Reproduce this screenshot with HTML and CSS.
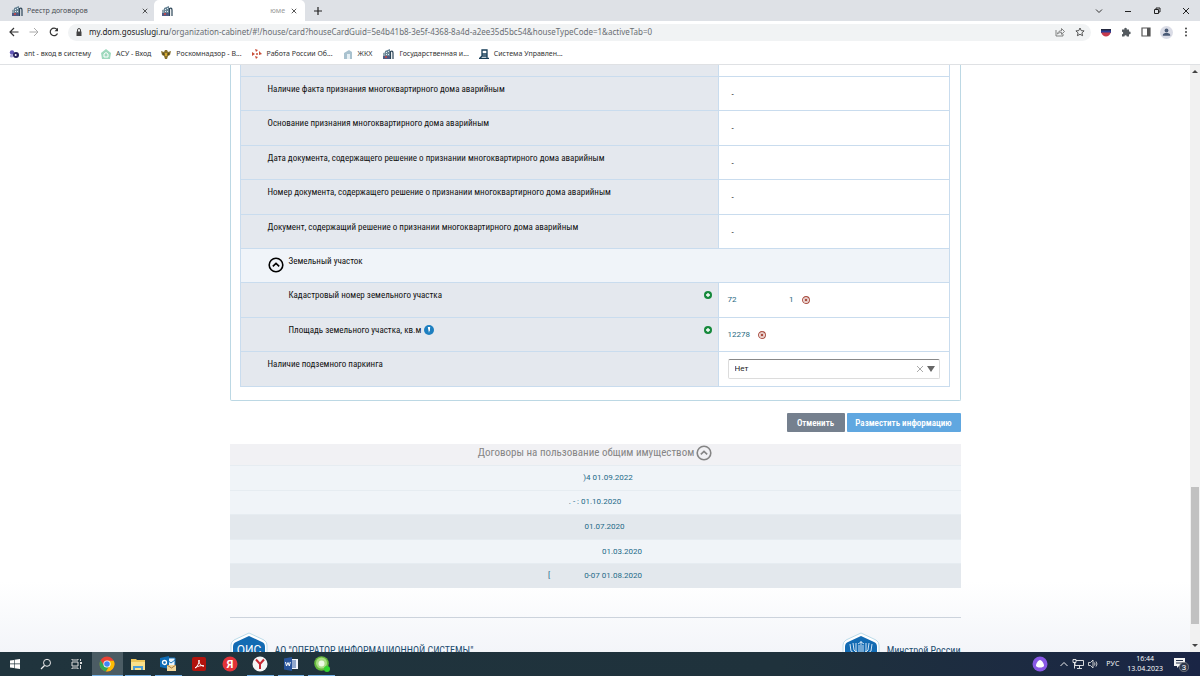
FILE: index.html
```html
<!DOCTYPE html>
<html lang="ru">
<head>
<meta charset="utf-8">
<title>Карточка дома</title>
<link rel="stylesheet" href="styles.css">
</head>
<body>
<svg class="defs" aria-hidden="true">
  <symbol id="building" viewBox="0 0 12 12">
    <path d="M1 5l3-1v7H1z" fill="#8fa3ae"/><path d="M3 3l5-2v9H3z" fill="#6a8596"/><path d="M4 4h1v1H4zm2-1h1v1H6zM4 6h1v1H4zm2 0h1v1H6z" fill="#dcebf2"/><path d="M8.500 11V3.500q2.500-1 2.500 1.500v6" fill="none" stroke="#2c4557" stroke-width="1.2"/><path d="M1 8h7v3H1z" fill="#4f5b85"/><path d="M3 8h2v2H3z" fill="#b34b50"/>
  </symbol>
  <symbol id="chevron-circle" viewBox="0 0 16 16">
    <circle cx="8" cy="8" r="6.8" fill="none" stroke="currentColor" stroke-width="1.6"/><path d="M4.8 9.3L8 6.4l3.2 2.9" fill="none" stroke="currentColor" stroke-width="1.6"/>
  </symbol>
  <symbol id="plus" viewBox="0 0 8 8">
    <circle cx="4" cy="4" r="4" fill="#16893c"/><path d="M4 2v4M2 4h4" stroke="#fff" stroke-width="1.3"/>
  </symbol>
  <symbol id="remove" viewBox="0 0 8 8">
    <circle cx="4" cy="4" r="3.4" fill="#fff" stroke="#a84b3e" stroke-width="1.1"/><path d="M2.600 2.600l2.800 2.800m0-2.800L2.600 5.400" stroke="#a84b3e" stroke-width="1.2"/>
  </symbol>
  <symbol id="close" viewBox="0 0 8 8">
    <path d="M1 1l6 6m0-6L1 7" fill="none" stroke="currentColor"/>
  </symbol>
</svg>

<header class="browser">
  <div class="tabs">
    <div class="tab"><svg class="favicon"><use href="#building"/></svg><span class="tab-title">Реестр договоров</span><button class="tab-close" aria-label="Закрыть"><svg class="i6"><use href="#close"/></svg></button></div>
    <div class="tab active"><svg class="favicon"><use href="#building"/></svg><span class="tab-title tab-title-end">юме</span><button class="tab-close" aria-label="Закрыть"><svg class="i6"><use href="#close"/></svg></button></div>
    <button class="new-tab" aria-label="Новая вкладка"><svg class="i8" viewBox="0 0 8 8"><path d="M4 0v8M0 4h8" stroke="#222" stroke-width="1.2"/></svg></button>
    <div class="window-controls">
      <button aria-label="Поиск вкладок"><svg class="i8" viewBox="0 0 8 8"><path d="M1 2.5l3 3 3-3" fill="none" stroke="#333"/></svg></button>
      <button aria-label="Свернуть"><svg class="i8" viewBox="0 0 8 8"><path d="M1 4.5h6" stroke="#222"/></svg></button>
      <button aria-label="Окно"><svg class="i8" viewBox="0 0 8 8"><path d="M1.5 2.5h4v4h-4zM3 2.500V1h4v4H5.500" fill="none" stroke="#222"/></svg></button>
      <button aria-label="Закрыть окно"><svg class="i8"><use href="#close"/></svg></button>
    </div>
  </div>
  <div class="toolbar">
    <button aria-label="Назад"><svg class="i10" viewBox="0 0 10 10"><path d="M9.500 5H1m4-4L1 5l4 4" fill="none" stroke="#333" stroke-width="1.2"/></svg></button>
    <button aria-label="Вперёд"><svg class="i10" viewBox="0 0 10 10"><path d="M.5 5H9M5 1l4 4-4 4" fill="none" stroke="#aaa"/></svg></button>
    <button aria-label="Обновить"><svg class="i10" viewBox="0 0 10 10"><path d="M8.500 6.500A3.800 3.800 0 1 1 8 2.500" fill="none" stroke="#333" stroke-width="1.2"/><path d="M9 .8v3.500H5.500z" fill="#333"/></svg></button>
    <div class="address">
      <svg class="i8" viewBox="0 0 8 8"><path d="M1.500 3.500h5V8h-5z" fill="#444"/><path d="M2.500 4V2a1.500 1.500 0 0 1 3 0v2" fill="none" stroke="#444"/></svg>
      <div class="url" role="textbox" aria-label="Адрес"><span class="host">my.dom.gosuslugi.ru</span>/organization-cabinet/#!/house/card?houseCardGuid=5e4b41b8-3e5f-4368-8a4d-a2ee35d5bc54&amp;houseTypeCode=1&amp;activeTab=0</div>
      <button aria-label="Поделиться"><svg class="i10" viewBox="0 0 10 10"><path d="M1 3v6h7V7M2.500 7c.5-2.500 2-3.200 4-3.200V1.500l3 3-3 2.800V5.500C5 5.500 3.500 5.800 2.500 7z" fill="none" stroke="#666" stroke-width=".8"/></svg></button>
      <button aria-label="Закладка"><svg class="i10" viewBox="0 0 10 10"><path d="M5 1l1.200 2.600 2.900.3-2.200 2 .7 2.800L5 7.300 2.400 8.700l.7-2.800-2.200-2 2.900-.3z" fill="none" stroke="#444" stroke-width=".9"/></svg></button>
    </div>
    <div class="extensions">
      <button aria-label="Расширение"><svg class="i12" viewBox="0 0 12 12"><path d="M1 4h10v3H1z" fill="#2b3f97"/><path d="M1 3h10v1.500H1z" fill="#24283e"/><path d="M1.200 6.500h9.600C10 9 8 10.500 6 10.500S2 9 1.200 6.500z" fill="#c53a4d"/></svg></button>
      <button aria-label="Расширения"><svg class="i10" viewBox="0 0 10 10"><path d="M1 2.500h2.300a1.300 1.300 0 1 1 2.500 0H8v2.200a1.300 1.300 0 1 1 0 2.500V9.500H5.800a1.200 1.200 0 0 0-2.400 0H1V7.200a1.200 1.200 0 0 0 0-2.400z" fill="#555b60"/></svg></button>
      <button aria-label="Боковая панель"><svg class="i10" viewBox="0 0 10 10"><path d="M1 1h8v8H1z" fill="none" stroke="#555" stroke-width="1.2"/><path d="M6 1h3v8H6z" fill="#555"/></svg></button>
      <button aria-label="Профиль"><svg class="i13" viewBox="0 0 13 13"><circle cx="6.500" cy="6.500" r="6.500" fill="#dadce6"/><circle cx="6.500" cy="4.500" r="1.900" fill="#4a5b76"/><path d="M2.800 9.800V9c0-2.600 7.400-2.600 7.400 0v.8z" fill="#4a5b76"/></svg></button>
      <button aria-label="Меню"><svg class="i10" viewBox="0 0 10 10"><g fill="#444"><circle cx="5" cy="1.500" r="1"/><circle cx="5" cy="5" r="1"/><circle cx="5" cy="8.500" r="1"/></g></svg></button>
    </div>
  </div>
  <nav class="bookmarks">
    <a href="#"><svg class="i10" viewBox="0 0 10 10"><circle cx="3" cy="3.500" r="2.200" fill="#6257b8"/><circle cx="7" cy="6" r="3" fill="#27215f"/><circle cx="2.500" cy="7" r="1.600" fill="#a6a0d8"/><circle cx="6.700" cy="6" r="1" fill="#fff"/></svg>ant - вход в систему</a>
    <a href="#"><svg class="i10" viewBox="0 0 10 10"><path d="M5 0l5 4-1 6H1L0 4z" fill="#9ed9bd"/><path d="M3 8V5l2-1.500L7 5v3z" fill="none" stroke="#fff"/></svg>АСУ - Вход</a>
    <a href="#"><svg class="i10" viewBox="0 0 10 10"><path d="M0 2l3 1 1-2h2l1 2 3-1-1 4-2 1-1 3H4L3 7 1 6z" fill="#86702b"/><path d="M4 4h2v3H4z" fill="#d5a92f"/><path d="M2 4l1 2m5-2L7 6" stroke="#443b25"/></svg>Роскомнадзор - В...</a>
    <a href="#"><svg class="i10" viewBox="0 0 10 10"><g fill="#c94f3a"><path d="M3 0l3 1-2 2zM7 2l3 3-3 1zM3 7l3 1-2 2zM0 3l3 2-3 2z"/><circle cx="5" cy="5" r="1"/></g></svg>Работа России Об...</a>
    <a href="#"><svg class="i10" viewBox="0 0 10 10"><path d="M1 4l5-3 3 2v7H7V5H4v5H1z" fill="#a9c2cf"/><path d="M4 5h3v5H4z" fill="#e5eff4"/></svg>ЖКХ</a>
    <a href="#"><svg class="favicon"><use href="#building"/></svg>Государственная и...</a>
    <a href="#"><svg class="i10" viewBox="0 0 10 10"><path d="M3 1h5v6H3zM0 9.300h10M3 7L1 9m7-2v2M3 5h5" fill="none" stroke="#173e58" stroke-width="1.3"/></svg>Система Управлен...</a>
  </nav>
</header>

<div class="viewport">
  <main class="page">
    <section class="panel">
      <table class="props">
        <colgroup><col class="col-name"><col></colgroup>
        <tbody>
        <tr class="cut"><th></th><td></td></tr>
        <tr><th scope="row">Наличие факта признания многоквартирного дома аварийным</th><td>-</td></tr>
        <tr><th scope="row">Основание признания многоквартирного дома аварийным</th><td>-</td></tr>
        <tr><th scope="row">Дата документа, содержащего решение о признании многоквартирного дома аварийным</th><td>-</td></tr>
        <tr><th scope="row">Номер документа, содержащего решение о признании многоквартирного дома аварийным</th><td>-</td></tr>
        <tr><th scope="row">Документ, содержащий решение о признании многоквартирного дома аварийным</th><td>-</td></tr>
        <tr class="group"><th colspan="2" scope="rowgroup"><div class="group-title"><button class="fold" aria-label="Свернуть раздел"><svg class="i16"><use href="#chevron-circle"/></svg></button><span>Земельный участок</span></div></th></tr>
        <tr class="sub"><th scope="row"><div class="name"><span>Кадастровый номер земельного участка</span><button aria-label="Добавить"><svg class="i8"><use href="#plus"/></svg></button></div></th><td class="filled"><div class="value"><a href="#" class="cadastre"><span>72</span><span>1</span></a><button aria-label="Удалить"><svg class="i8"><use href="#remove"/></svg></button></div></td></tr>
        <tr class="sub"><th scope="row"><div class="name"><span>Площадь земельного участка, кв.м</span><svg class="i10 hint" viewBox="0 0 10 10"><circle cx="5" cy="5" r="5" fill="#1d7fc0"/><path d="M3.800 2h2.400L5.800 6h-.4L5 8l-.4-2z" fill="#fff"/></svg><button aria-label="Добавить"><svg class="i8"><use href="#plus"/></svg></button></div></th><td class="filled"><div class="value"><a href="#">12278</a><button aria-label="Удалить"><svg class="i8"><use href="#remove"/></svg></button></div></td></tr>
        <tr><th scope="row"><label for="parking">Наличие подземного паркинга</label></th><td class="filled"><div class="combo"><select id="parking"><option>Нет</option><option>Да</option></select><button aria-label="Очистить"><svg class="i8"><use href="#close"/></svg></button><svg class="i8" viewBox="0 0 8 8"><path d="M0 1h8L4 7z" fill="#666"/></svg></div></td></tr>
        </tbody>
      </table>
    </section>
    <div class="actions"><button class="btn cancel">Отменить</button><button class="btn submit">Разместить информацию</button></div>
    <section class="contracts">
      <h2>Договоры на пользование общим имуществом <button class="fold" aria-label="Свернуть список"><svg class="i16"><use href="#chevron-circle"/></svg></button></h2>
      <ul>
        <li><a href="#"><span class="gap-m"></span>)4 01.09.2022</a></li>
        <li><a href="#">. - : 01.10.2020</a></li>
        <li class="dark"><a href="#"><span class="gap-s"></span>01.07.2020</a></li>
        <li><a href="#"><span class="gap-l"></span>01.03.2020</a></li>
        <li class="dark"><a href="#">[<span class="gap-n"></span>0-07 01.08.2020</a></li>
      </ul>
    </section>
    <footer class="site-footer">
      <div class="org"><svg class="hex" viewBox="0 0 38 42"><path d="M19 1l15 7q3 2 3 5v16q0 3-3 5l-15 7-15-7q-3-2-3-5V13q0-3 3-5z" fill="#fff" stroke="#bcdcea"/><path d="M19 4l13 6q3 1 3 5v13q0 3-3 4l-13 6-13-6q-3-1-3-4V15q0-4 3-5z" fill="#126bb3"/><text x="19" y="22" text-anchor="middle" class="hex-text">ОИС</text></svg><span>АО "ОПЕРАТОР ИНФОРМАЦИОННОЙ СИСТЕМЫ"</span></div>
      <div class="org"><svg class="hex" viewBox="0 0 38 42"><path d="M19 1l15 7q3 2 3 5v16q0 3-3 5l-15 7-15-7q-3-2-3-5V13q0-3 3-5z" fill="#fff" stroke="#bcdcea"/><path d="M19 4l13 6q3 1 3 5v13q0 3-3 4l-13 6-13-6q-3-1-3-4V15q0-4 3-5z" fill="#126bb3"/><path d="M19 9v12M16 12l3-2 3 2M17 13v8M21 13v8M8 12l1 7 6 4m15-11l-1 7-6 4M11 11l1 7 4 4m11-11l-1 7-4 4M14 11v8l3 4m7-12v8l-3 4" fill="none" stroke="#cfe4f4"/></svg><span>Минстрой России</span></div>
    </footer>
  </main>
  <div class="scrollbar" aria-hidden="true"><svg class="i6" viewBox="0 0 6 6"><path d="M0 5l3-3 3 3z" fill="#444"/></svg><div class="track"><div class="thumb"></div></div><svg class="i6" viewBox="0 0 6 6"><path d="M0 1l3 3 3-3z" fill="#444"/></svg></div>
</div>

<footer class="taskbar">
  <div class="apps">
    <button aria-label="Пуск"><svg class="i12" viewBox="0 0 12 12"><path d="M1 2.500l4-.6v3.700H1zM5.600 1.800L11 1v4.600H5.600zM1 6.300h4v3.700l-4-.6zM5.600 6.300H11v4.700l-5.400-.8z" fill="#fff"/></svg></button>
    <button aria-label="Поиск"><svg class="i12" viewBox="0 0 12 12"><circle cx="7" cy="4.800" r="3.500" fill="none" stroke="#eee"/><path d="M4.500 7.500L1 11" stroke="#eee" stroke-width="1.200"/></svg></button>
    <button aria-label="Представление задач"><svg class="i12" viewBox="0 0 12 12"><path d="M1 4h6v4H1zM1 1v1h6V1M1 11v-1h6v1M9.500 1v2m0 4v4" fill="none" stroke="#ddd"/><path d="M9 4h2v2H9z" fill="#ddd"/></svg></button>
    <button class="current open" aria-label="Chrome"><svg class="i16" viewBox="0 0 16 16"><circle cx="8" cy="8" r="7.500" fill="#e94235"/><path d="M1.500 4.200A7.500 7.500 0 0 0 7 15.400L10.800 9 8 8 5 9.500z" fill="#34a853"/><path d="M14.800 4.800A7.500 7.500 0 0 1 7 15.400L11 9 8 4.800z" fill="#fbbc05"/><circle cx="8" cy="8" r="3.600" fill="#fff"/><circle cx="8" cy="8" r="2.800" fill="#4285f4"/></svg></button>
    <button class="open" aria-label="Проводник"><svg class="i14" viewBox="0 0 14 14"><path d="M0 2h5l1 1h8v10H0z" fill="#efc65a"/><path d="M0 5h14v8H0z" fill="#fbe08b"/><path d="M2 9h10v4h-2v-2H4v2H2z" fill="#4e9ed6"/></svg></button>
    <button class="open" aria-label="Outlook"><svg class="i16" viewBox="0 0 16 16"><path d="M7 2h8v9H7z" fill="#eaf4fc" stroke="#1673ba"/><path d="M7 4l4 3 4-3" fill="none" stroke="#1673ba"/><path d="M0 2l9-2v13l-9-2z" fill="#0e6cb6"/><circle cx="4.500" cy="6.500" r="2" fill="none" stroke="#fff" stroke-width="1.300"/><path d="M7 9h9v6H7z" fill="#f3d79a"/><path d="M7 9l4.500 3L16 9" fill="none" stroke="#a5783e"/></svg></button>
    <button aria-label="Acrobat"><svg class="i14" viewBox="0 0 14 14"><rect width="14" height="14" rx="2" fill="#b1130d"/><path d="M3 11c3-2 4-5 4-8 0 4 2 6 5 6-3-1-6 0-9 2z" fill="none" stroke="#fff"/></svg></button>
    <button aria-label="Яндекс"><svg class="i16" viewBox="0 0 16 16"><circle cx="8" cy="8" r="7.500" fill="#e23239"/><text x="8" y="12" text-anchor="middle" class="logo-text">Я</text></svg></button>
    <button class="open" aria-label="Яндекс Браузер"><svg class="i16" viewBox="0 0 16 16"><circle cx="8" cy="8" r="7.500" fill="#f5f5f5"/><path d="M4 3.500L8 8l4-4.500M8 7.500V13" fill="none" stroke="#c82832" stroke-width="2"/></svg></button>
    <button class="open" aria-label="Word"><svg class="i14" viewBox="0 0 14 14"><path d="M7 2h7v10H7z" fill="#f1f5fb"/><path d="M8 4h4M8 6h4M8 8h4M8 10h4" stroke="#335c9e"/><path d="M0 1.500L8 0v14l-8-1.500z" fill="#28549b"/><path d="M1.500 5l1 4L4 5.500 5.300 9l1-4" fill="none" stroke="#fff"/></svg></button>
    <button class="open" aria-label="Мессенджер"><svg class="i16" viewBox="0 0 16 16"><circle cx="7.500" cy="7.500" r="7.300" fill="#65b83c"/><circle cx="7.500" cy="7" r="5.500" fill="#a9dd83"/><circle cx="7.500" cy="7.500" r="3" fill="#eefae5"/><circle cx="13" cy="13" r="3" fill="#32d52f"/></svg></button>
  </div>
  <div class="tray">
    <button aria-label="Алиса"><svg class="i16" viewBox="0 0 16 16"><circle cx="8" cy="8" r="7.500" fill="#8958e6"/><path d="M8 4c2 0 4 4 4 5.500S10 11.500 8 11.500 4 11 4 9.500 6 4 8 4z" fill="#fff"/></svg></button>
    <div class="status">
      <svg class="i8" viewBox="0 0 8 8"><path d="M.5 6L4 2.500 7.500 6" fill="none" stroke="#eee"/></svg>
      <svg class="i12" viewBox="0 0 12 12"><path d="M4 2.500h7.500v5H3v-3M7.500 7.500V10M5 10.500h5M1 1.500h3v3H1zM2.500 4.500v6" fill="none" stroke="#eee" stroke-width=".9"/></svg>
      <svg class="i10" viewBox="0 0 10 10"><path d="M.5 3.500h2L5 1v8L2.500 6.500h-2zM6.500 3.500q1 1.500 0 3M8 2.500q2 2.500 0 5" fill="none" stroke="#ddd" stroke-width=".9"/></svg>
    </div>
    <span class="lang">РУС</span>
    <time class="clock" datetime="2023-04-13T16:44"><span>16:44</span><span>13.04.2023</span></time>
    <button aria-label="Уведомления"><svg class="i16" viewBox="0 0 16 16"><path d="M1 2h11v8H6l-2 2v-2H1z" fill="#f3f3f3"/><path d="M3 4.500h7M3 7h7" stroke="#27324a"/><circle cx="11" cy="11" r="4.700" fill="#30394c" stroke="#999" stroke-width=".6"/><text x="11" y="14" text-anchor="middle" class="badge-text">3</text></svg></button>
  </div>
</footer>
</body>
</html>
```

FILE: styles.css
```css
* { box-sizing: border-box; }
body { margin: 0; height: 100vh; display: flex; flex-direction: column; overflow: hidden; font-family: "Open Sans", sans-serif; font-size: 8px; line-height: 10px; color: #333; background: #fff; }
button { border: 0; padding: 0; background: none; font: inherit; color: inherit; display: flex; align-items: center; justify-content: center; }
a { color: inherit; text-decoration: none; }
svg { display: block; flex: none; }
.defs { position: absolute; width: 0; height: 0; }
.i6 { width: 6px; height: 6px; }
.i8 { width: 8px; height: 8px; }
.i10 { width: 10px; height: 10px; }
.i12, .favicon { width: 12px; height: 12px; }
.i13 { width: 13px; height: 13px; }
.i14 { width: 14px; height: 14px; }
.i16 { width: 16px; height: 16px; }

/* browser window */
.browser { flex: none; border-bottom: 1px solid #dfe1e4; }
.tabs { display: flex; height: 21px; background: #dee1e6; }
.tab { width: 154px; display: flex; align-items: center; gap: 4px; padding: 0 6px 0 11px; color: #4a4e54; font-family: "Noto Sans", sans-serif; font-size: 7px; }
.tab.active { width: 151px; padding: 0 8px 0 7px; background: #fff; border-radius: 5px 5px 0 0; }
.tab-title { flex: 1; }
.tab-title-end { text-align: right; padding-right: 2px; color: #999; }
.tab-close { color: #222; }
.new-tab { width: 26px; }
.window-controls { margin-left: auto; display: flex; }
.window-controls button { width: 29px; color: #222; }
.toolbar { display: flex; align-items: center; height: 22px; padding-left: 8px; gap: 8px; }
.toolbar > button { width: 12px; }
.address { flex: 1; display: flex; align-items: center; height: 17px; gap: 10px; padding: 0 6px 0 7px; border-radius: 9px; background: #f1f3f4; }
.address .url { flex: 1; margin-left: -4px; color: #6a6e73; font-family: "Noto Sans", sans-serif; }
.url .host { color: #222; }
.extensions { display: flex; padding-right: 4px; margin-left: -3px; }
.extensions button { width: 20px; }
.bookmarks { display: flex; align-items: center; gap: 10px; height: 21px; padding: 0 9px; font-family: "Noto Sans", sans-serif; font-size: 7px; }
.bookmarks a { display: flex; align-items: center; gap: 5px; }

/* page */
.viewport { flex: 1; min-height: 0; display: flex; overflow: hidden; background: linear-gradient(#fff 88%, #f3f5f9); }
.page { flex: 1; min-width: 0; font-family: "Roboto Condensed", Roboto, sans-serif; }
.page > * { width: 731px; max-width: 100%; margin-left: auto; margin-right: auto; }
.panel { padding: 0 10px 13px 9px; border: 1px solid #bcd8e4; border-top: 0; border-radius: 0 0 2px 2px; }
.props { width: 100%; height: 322px; border-collapse: collapse; table-layout: fixed; font-family: "Liberation Sans Narrow", "Roboto Condensed", sans-serif; font-size: 9px; }
.col-name { width: 478px; }
.props th, .props td { border: 1px solid #c9dcee; vertical-align: top; text-align: left; font-weight: 400; height: 34px; }
.props th { padding: 7px 6px 0 27px; background: #e4e8ee; color: #111; }
.props td { padding: 12px 9px 0 13px; }
.props .cut th, .props .cut td { height: 11px; padding: 0; border-top: 0; }
.props .group th { background: #f0f4f9; }
.props .sub th { padding-left: 48px; }
.props td.filled { padding: 12px 9px 0; font-family: Roboto, sans-serif; font-size: 8px; color: #28697f; }
.group-title { display: flex; gap: 5px; }
.group-title .fold { margin-top: 1px; margin-bottom: -7px; align-self: flex-start; color: #000; }
.name { display: flex; gap: 3px; }
.name button { margin-left: auto; align-self: center; }
.value { display: flex; align-items: center; gap: 8px; }
.cadastre { display: flex; justify-content: space-between; width: 66px; }
.props td.filled:has(.combo) { padding-top: 7px; }
.combo { display: flex; align-items: center; gap: 3px; height: 20px; padding: 0 4px 0 6px; border: 1px solid #dcdcdc; border-top-color: #888; border-radius: 2px; background: #fff; }
.combo select { flex: 1; appearance: none; border: 0; padding: 0; background: none; font: inherit; color: #222; }
.combo button { color: #aaa; }

.actions { display: flex; justify-content: flex-end; gap: 2px; padding: 12px 0; }
.btn { height: 19px; border-radius: 1px; color: #fff; font-size: 9px; font-weight: 600; }
.cancel { width: 58px; background: #75808e; }
.submit { width: 114px; background: #60a7e0; }
.contracts h2 { display: flex; align-items: center; justify-content: center; gap: 2px; margin: 0; height: 21px; padding-bottom: 3px; background: #f1f1f4; color: #858585; font-size: 11px; font-weight: 400; }
.contracts ul { display: flex; flex-direction: column; height: 123px; margin: 0; padding: 0; list-style: none; font-family: Roboto, sans-serif; font-size: 8px; color: #236a88; }
.contracts li { flex: 1; display: flex; align-items: center; justify-content: center; border-top: 1px solid #e6ecf1; background: #f0f4f8; }
.contracts li.dark { background: #e3e8ed; }
.gap-s, .gap-m, .gap-n, .gap-l { display: inline-block; }
.gap-s { width: 19px; }
.gap-m { width: 26px; }
.gap-n { width: 34px; }
.gap-l { width: 54px; }
.site-footer { display: flex; justify-content: space-between; margin-top: 29px; padding-top: 14px; border-top: 1px solid #ccd3dc; font-size: 10px; color: #1c4d70; }
.org { display: flex; align-items: center; gap: 7px; }
.org span { margin-bottom: 4px; }
.hex { width: 38px; height: 42px; }
.hex-text { font: 12px Roboto, sans-serif; fill: #fff; }

.scrollbar { flex: none; width: 10px; display: flex; flex-direction: column; align-items: center; padding: 3px 0; background: #f1f1f1; }
.track { flex: 1; align-self: stretch; display: flex; flex-direction: column; justify-content: flex-end; padding: 0 1px 19px; }
.thumb { height: 25%; background: #c1c1c1; }

/* taskbar */
.taskbar { flex: none; display: flex; justify-content: space-between; height: 24px; background: linear-gradient(90deg, #20343d, #1f323c 65%, #1a2545); color: #fff; font-size: 7px; }
.apps { display: grid; grid-template-columns: repeat(11, 1fr); width: 337px; }
.apps button { margin: 0 2px; border-bottom: 1px solid transparent; }
.apps .open { border-bottom-color: #76b3e8; }
.apps .current { margin: 0; background: #4b5c64; }
.tray { display: flex; align-items: center; gap: 8px; padding-right: 11px; }
.status { display: flex; align-items: center; gap: 4px; margin-left: 4px; }
.clock { display: flex; flex-direction: column; align-items: center; }
.clock + button { margin-left: 2px; }
.logo-text { font: 700 11px Roboto, sans-serif; fill: #fff; }
.badge-text { font: 8px Roboto, sans-serif; fill: #fff; }
```
